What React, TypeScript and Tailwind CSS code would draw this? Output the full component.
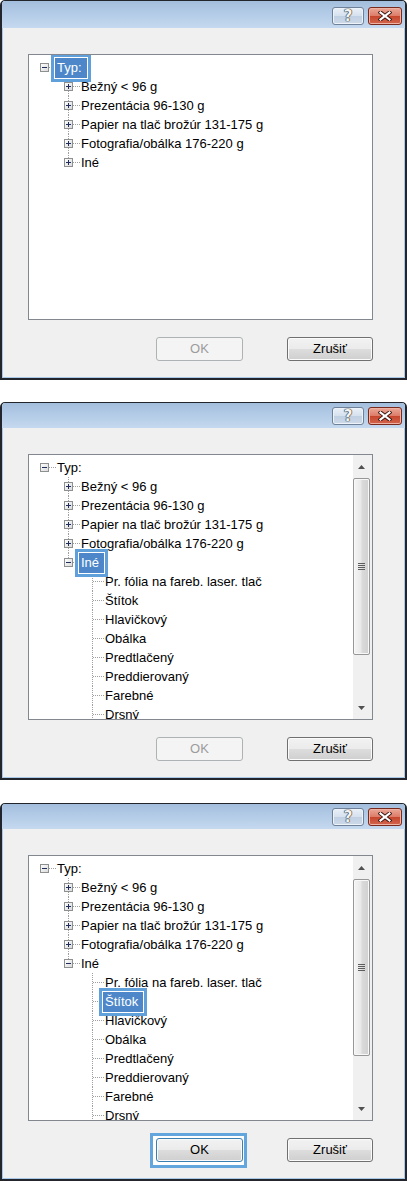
import React from 'react';

type Node = {
  label: string;
  level: number;
  box?: 'plus' | 'minus';
  next?: boolean;
  sel?: boolean;
};

const DOT = '#a0a0a0';

function Connector({ level, box, next }: { level: number; box?: 'plus' | 'minus'; next?: boolean }) {
  return (
    <svg width="24" height="19" className="block shrink-0" shapeRendering="crispEdges">
      {level > 0 && <line x1="12.5" y1="0" x2="12.5" y2="9" stroke={DOT} strokeDasharray="1 1" />}
      {next && <line x1="12.5" y1="10" x2="12.5" y2="19" stroke={DOT} strokeDasharray="1 1" />}
      <line x1={box ? 17 : 13} y1="9.5" x2="24" y2="9.5" stroke={DOT} strokeDasharray="1 1" />
      {box && (
        <>
          <rect x="8.5" y="5.5" width="8" height="8" fill="url(#tvbox)" stroke="#8e8f8f" />
          <line x1="10" y1="9.5" x2="15" y2="9.5" stroke="#1f2d5c" />
          {box === 'plus' && <line x1="12.5" y1="7" x2="12.5" y2="12" stroke="#1f2d5c" />}
        </>
      )}
    </svg>
  );
}

function TreeRow({ n }: { n: Node }) {
  return (
    <div className="flex h-[19px] items-center">
      {Array.from({ length: n.level }).map((_, i) => (
        <div key={i} className="w-[24px] shrink-0" />
      ))}
      <Connector level={n.level} box={n.box} next={n.next} />
      <span className="relative ml-[1px] whitespace-nowrap text-[13px] leading-[19px] text-black">
        {n.sel && (
          <span className="absolute -bottom-[5px] -left-[6px] -right-[9px] -top-[4px] border-[3px] border-[#5f9fda] bg-white p-[1px]">
            <span className="block h-full w-full bg-[#4d87c9]" />
          </span>
        )}
        <span className={n.sel ? 'relative text-white' : ''}>{n.label}</span>
      </span>
    </div>
  );
}

function Scrollbar() {
  return (
    <div className="flex w-[19px] shrink-0 flex-col bg-[#f0f0f0]">
      <div className="flex h-[23px] justify-center pt-[10px] pr-[2px]">
        <svg width="7" height="4" className="block">
          <path d="M0 4 L3.5 0 L7 4 Z" fill="#505050" />
        </svg>
      </div>
      <div className="flex h-[177px] w-[17px] flex-col items-center justify-center gap-[1px] rounded-[2px] border border-[#979797] bg-[linear-gradient(to_right,#f4f4f4,#e9e9e9_45%,#dadada_55%,#d0d0d0)] shadow-[inset_0_0_0_1px_#f8f8f8]">
        <div className="h-px w-[7px] bg-[#5d5d5d]" />
        <div className="h-px w-[7px] bg-[#5d5d5d]" />
        <div className="h-px w-[7px] bg-[#5d5d5d]" />
        <div className="h-px w-[7px] bg-[#5d5d5d]" />
      </div>
      <div className="flex-1" />
      <div className="flex h-[22px] justify-center pt-[9px] pr-[2px]">
        <svg width="7" height="4" className="block">
          <path d="M0 0 L7 0 L3.5 4 Z" fill="#505050" />
        </svg>
      </div>
    </div>
  );
}

const btnBase =
  "flex h-[24px] items-center justify-center rounded-[3px] border text-[13px] font-['Liberation_Sans',Arial,sans-serif]";
const btnNormal =
  'border-[#707070] bg-[linear-gradient(#f2f2f2_0%,#ebebeb_50%,#dddddd_50%,#cfcfcf_100%)] shadow-[inset_0_0_0_1px_#fbfbfb] text-black';

function Dialog({
  first,
  expanded,
  sel,
  okFocus,
}: {
  first?: boolean;
  expanded?: boolean;
  sel: string;
  okFocus?: boolean;
}) {
  const rows: Node[] = [
    { label: 'Typ:', level: 0, box: 'minus' },
    { label: 'Bežný < 96 g', level: 1, box: 'plus', next: true },
    { label: 'Prezentácia 96-130 g', level: 1, box: 'plus', next: true },
    { label: 'Papier na tlač brožúr 131-175 g', level: 1, box: 'plus', next: true },
    { label: 'Fotografia/obálka 176-220 g', level: 1, box: 'plus', next: true },
    { label: 'Iné', level: 1, box: expanded ? 'minus' : 'plus' },
  ];
  if (expanded) {
    [
      'Pr. fólia na fareb. laser. tlač',
      'Štítok',
      'Hlavičkový',
      'Obálka',
      'Predtlačený',
      'Preddierovaný',
      'Farebné',
      'Drsný',
    ].forEach((label) => rows.push({ label, level: 2, next: true }));
  }
  rows.forEach((r) => (r.sel = r.label === sel));

  return (
    <div className="w-[407px] overflow-hidden rounded-t-[5px] border-x-2 border-b-2 border-t border-[#22262c]">
      {/* title bar */}
      <div
        className={`flex items-start justify-end gap-[4px] bg-[linear-gradient(#a3bedd,#b4cce7_50%,#c5d9ef)] pr-[3px] ${
          first ? 'h-[27px] pt-[6px]' : 'h-[25px] pt-[4px]'
        }`}
      >
        <div className="flex h-[18px] w-[32px] items-center justify-center rounded-[3px] border border-[#6f8199] bg-[linear-gradient(#e9f0f8,#d6e1ee_50%,#c0d0e3_50%,#cdd9e8)] shadow-[inset_0_0_0_1px_#eef3f9]">
          <span className="font-['DejaVu_Sans',sans-serif] text-[15px] font-bold leading-none text-[#f4f4f4] [text-shadow:0_0_1px_#2a2a2a,0_0_1px_#2a2a2a,0_0_1px_#2a2a2a]">
            ?
          </span>
        </div>
        <div className="flex h-[18px] w-[34px] items-center justify-center rounded-[3px] border border-[#7a2a1d] bg-[linear-gradient(#eaa797_0%,#dd7d69_48%,#c6462d_52%,#d3654e_100%)] shadow-[inset_0_0_0_1px_#efb3a5]">
          <svg width="14" height="10" className="block">
            <path d="M2.5 1.5 L11.5 8.5 M11.5 1.5 L2.5 8.5" stroke="#3a1510" strokeWidth="4" strokeLinecap="square" />
            <path d="M2.5 1.5 L11.5 8.5 M11.5 1.5 L2.5 8.5" stroke="#ffffff" strokeWidth="2.2" strokeLinecap="square" />
          </svg>
        </div>
      </div>

      {/* body */}
      <div className="border-x border-b border-[#a9c7e7] bg-[#f0f0f0] pb-[16px] pl-[25px] pr-[31px] pt-[26px] font-['Liberation_Sans',Arial,sans-serif]">
        <div className="flex h-[266px] border border-[#828790] bg-white">
          <div className="flex-1 overflow-hidden pl-[3px] pt-[3px]">
            {rows.map((r) => (
              <TreeRow key={r.label} n={r} />
            ))}
          </div>
          {expanded && <Scrollbar />}
        </div>

        <div className="mt-[17px] flex justify-end gap-[44px]">
          <div className="relative">
            {okFocus && (
              <div className="absolute -bottom-[6px] -left-[6px] -right-[4px] -top-[5px] border-[3px] border-[#63a5dd] bg-white" />
            )}
            <div
              className={`relative w-[87px] ${btnBase} ${
                okFocus
                  ? 'border-[#3c7fb1] bg-[linear-gradient(#f2f2f2_0%,#ebebeb_50%,#dddddd_50%,#cfcfcf_100%)] shadow-[inset_0_0_0_1px_#fbfbfb] text-black'
                  : 'border-[#adb2b5] bg-[#f4f4f4] text-[#9c9c9c]'
              }`}
            >
              OK
            </div>
          </div>
          <div className={`w-[86px] ${btnBase} ${btnNormal}`}>Zrušiť</div>
        </div>
      </div>
    </div>
  );
}

export default function App() {
  return (
    <div className="min-h-[1181px] w-[407px] bg-white">
      <svg width="0" height="0" className="absolute">
        <defs>
          <linearGradient id="tvbox" x1="0" y1="0" x2="1" y2="1">
            <stop offset="0" stopColor="#ffffff" />
            <stop offset="1" stopColor="#d9d9d9" />
          </linearGradient>
        </defs>
      </svg>
      <Dialog first sel="Typ:" />
      <div className="mt-[22px]">
        <Dialog expanded sel="Iné" />
      </div>
      <div className="mt-[23px]">
        <Dialog expanded sel="Štítok" okFocus />
      </div>
    </div>
  );
}
